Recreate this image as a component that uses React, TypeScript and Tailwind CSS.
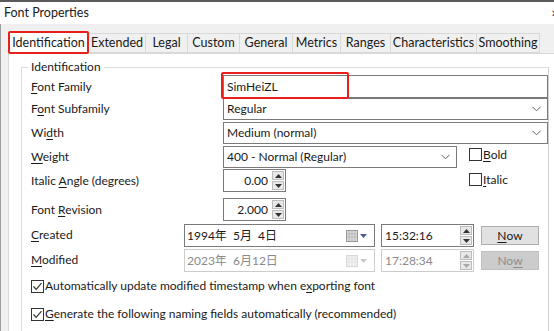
import { JSX, ReactNode } from "react";

const font = { fontFamily: 'Lato, "Noto Sans CJK SC", sans-serif' };

const U = ({ children }: { children: ReactNode }) => <span className="underline underline-offset-2">{children}</span>;

const Chevron = () => (
    <svg width="9" height="6" viewBox="0 0 9 6" className="text-[#606060]">
        <path d="M0.5 0.8 L4.5 4.8 L8.5 0.8" fill="none" stroke="currentColor" strokeWidth="1" />
    </svg>
);

const Arrow = ({ up, disabled }: { up?: boolean; disabled?: boolean }) => (
    <div className="flex-1 flex items-center justify-center bg-[#e8e8e8] border border-[#bcbcbc]">
        <svg width="7" height="4" viewBox="0 0 7 4">
            <path d={up ? "M0 4 L3.5 0 L7 4 Z" : "M0 0 L3.5 4 L7 0 Z"} fill={disabled ? "#a8a8a8" : "#333"} />
        </svg>
    </div>
);

const Spinner = ({ value, w, disabled, left }: { value: string; w: string; disabled?: boolean; left?: boolean }) => (
    <div className={`flex h-[23px] border ${disabled ? "border-[#cccccc] text-[#8a8a8a]" : "border-[#7a7a7a]"} bg-white ${w}`}>
        <div className={`flex-1 flex items-center px-[3px] ${left ? "" : "justify-end"}`}>{value}</div>
        <div className="w-[14px] flex flex-col p-px gap-px">
            <Arrow up disabled={disabled} />
            <Arrow disabled={disabled} />
        </div>
    </div>
);

const Select = ({ value, w }: { value: string; w: string }) => (
    <div className={`flex items-center justify-between h-[22px] border border-[#7a7a7a] bg-white pl-[3px] pr-[6px] ${w}`}>
        <span>{value}</span>
        <Chevron />
    </div>
);

const Check = ({ checked }: { checked?: boolean }) => (
    <div className="w-[13px] h-[13px] border border-[#333] bg-white flex items-center justify-center shrink-0">
        {checked && (
            <svg width="11" height="11" viewBox="0 0 11 11">
                <path d="M1.5 5.5 L4.2 8.3 L9.5 2.2" fill="none" stroke="#333" strokeWidth="1.2" />
            </svg>
        )}
    </div>
);

const Calendar = ({ disabled }: { disabled?: boolean }) => (
    <div className="flex items-center gap-[2px]">
        <svg width="12" height="12" viewBox="0 0 12 12">
            <rect x="0.5" y="0.5" width="11" height="11" fill={disabled ? "#f2f2f2" : "#dcdcdc"} stroke={disabled ? "#d8d8d8" : "#9a9a9a"} />
            <path d="M3 1 V11 M6 1 V11 M9 1 V11 M1 4 H11 M1 7 H11" stroke={disabled ? "#e4e4e4" : "#b8b8b8"} strokeWidth="1" />
        </svg>
        <svg width="7" height="4" viewBox="0 0 7 4">
            <path d="M0 0 L3.5 4 L7 0 Z" fill={disabled ? "#c8c8c8" : "#4a5a8a"} />
        </svg>
    </div>
);

const Row = ({ label, children, className }: { label: ReactNode; children: ReactNode; className?: string }) => (
    <div className={`flex items-center ${className ?? ""}`}>
        <div className="w-[192px] shrink-0">{label}</div>
        {children}
    </div>
);

const tabs = ["Extended", "Legal", "Custom", "General", "Metrics", "Ranges", "Characteristics", "Smoothing"];
const tabWidths = ["w-[57px]", "w-[42px]", "w-[52px]", "w-[53px]", "w-[48px]", "w-[50px]", "w-[86px]", "w-[63px]"];

export default function App(): JSX.Element {
    return (
        <div className="w-[554px] h-[331px] overflow-hidden bg-[#f0f0f0] text-[12px] leading-[16px] text-[#1a1a1a] relative" style={font}>
            <div className="h-[2px] bg-[#5a5a5a]" />
            <div className="h-[22px] bg-white flex items-center justify-between pl-[4px]">
                <span className="text-[12.5px]">Font Properties</span>
                <span className="text-[#333] text-[10px] -mr-[5px]">✕</span>
            </div>
            <div className="flex border-l border-[#a0a0a0] h-[307px]">
                <div className="flex-1 flex flex-col pl-[7px] pt-[8px]">
                    <div className="flex items-end h-[21px] relative z-10">
                        <div className="w-[81px] h-[23px] -mb-px bg-white border-2 border-[#e8201c] rounded-[2px] flex items-center justify-center text-[12.5px]">
                            Identification
                        </div>
                        {tabs.map((t, i) => (
                            <div key={t} className={`${tabWidths[i]} h-[20px] border border-[#d9d9d9] border-l-0 first:border-l bg-[#f0f0f0] flex items-center justify-center text-[12.5px]`}>
                                {t}
                            </div>
                        ))}
                    </div>
                    <div className="flex-1 bg-white border-t border-l border-[#d9d9d9] pl-[12px] pt-[13px]">
                        <div className="border border-[#dcdcdc] border-r-[#d0d0d0] h-[300px] w-[528px] relative pl-[9px] pt-[7px]">
                            <div className="absolute -top-[9px] left-[6px] bg-white px-[3px] leading-[16px]">Identification</div>
                            <Row label={<><U>F</U>ont Family</>}>
                                <div className="h-[23px] w-[326px] border border-[#7a7a7a] bg-white flex items-center pl-[3px] relative">
                                    SimHeiZL
                                    <div className="absolute -left-[3px] -top-[4px] w-[128px] h-[27px] border-2 border-[#e8201c] rounded-[2px]" />
                                </div>
                            </Row>
                            <Row label={<>F<U>o</U>nt Subfamily</>}>
                                <Select value="Regular" w="w-[326px]" />
                            </Row>
                            <Row label={<>Wi<U>d</U>th</>} className="mt-[2px]">
                                <Select value="Medium (normal)" w="w-[326px]" />
                            </Row>
                            <Row label={<><U>W</U>eight</>} className="mt-[2px]">
                                <Select value="400 - Normal (Regular)" w="w-[234px]" />
                                <div className="flex items-center gap-[1px] ml-[12px] -mt-[5px]">
                                    <Check />
                                    <span><U>B</U>old</span>
                                </div>
                            </Row>
                            <Row label={<>Italic <U>A</U>ngle (degrees)</>} className="mt-[1px]">
                                <Spinner value="0.00" w="w-[63px]" />
                                <div className="flex items-center gap-[1px] ml-[183px] -mt-[2px]">
                                    <Check />
                                    <span><U>I</U>talic</span>
                                </div>
                            </Row>
                            <Row label={<>Font <U>R</U>evision</>} className="mt-[6px]">
                                <Spinner value="2.000" w="w-[63px]" />
                            </Row>
                            <div className="flex items-center mt-[3px]">
                                <div className="w-[153px] shrink-0 -mt-[2px]"><U>C</U>reated</div>
                                <div className="w-[191px] h-[23px] border border-[#7a7a7a] bg-white flex items-center justify-between pl-[2px] pr-[7px]">
                                    <span>1994年&nbsp; 5月&nbsp; 4日</span>
                                    <Calendar />
                                </div>
                                <div className="ml-[6px]">
                                    <Spinner value="15:32:16" w="w-[93px]" left />
                                </div>
                                <div className="ml-[7px] w-[58px] h-[19px] bg-[#e1e1e1] border border-[#adadad] flex items-center justify-center">
                                    <U>N</U>ow
                                </div>
                            </div>
                            <div className="flex items-center mt-[2px]">
                                <div className="w-[153px] shrink-0 -mt-[2px]"><U>M</U>odified</div>
                                <div className="w-[191px] h-[23px] border border-[#cccccc] bg-white text-[#8a8a8a] flex items-center justify-between pl-[2px] pr-[7px]">
                                    <span>2023年&nbsp; 6月12日</span>
                                    <Calendar disabled />
                                </div>
                                <div className="ml-[6px]">
                                    <Spinner value="17:28:34" w="w-[93px]" left disabled />
                                </div>
                                <div className="ml-[7px] w-[58px] h-[19px] bg-[#cccccc] border border-[#bfbfbf] text-[#8c8c8c] flex items-center justify-center">
                                    No<U>w</U>
                                </div>
                            </div>
                            <div className="flex items-center gap-[1px] mt-[6px]">
                                <Check checked />
                                <span>Automatically update modified timestamp when e<U>x</U>porting font</span>
                            </div>
                            <div className="flex items-center gap-[1px] mt-[12px]">
                                <Check checked />
                                <span><U>G</U>enerate the following naming fields automatically (recommended)</span>
                            </div>
                        </div>
                    </div>
                </div>
            </div>
        </div>
    );
}
